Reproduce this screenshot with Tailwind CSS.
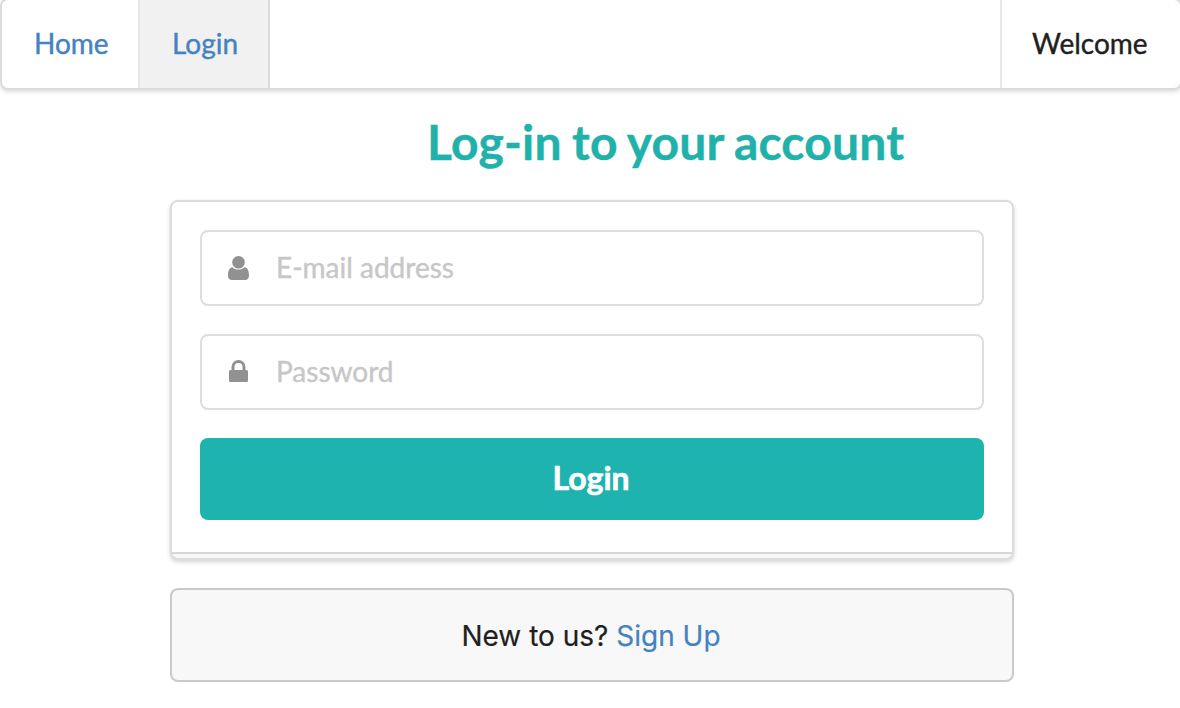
<!DOCTYPE html>
<html lang="en">
<head>
<meta charset="utf-8">
<title>Login</title>
<script src="https://cdn.jsdelivr.net/npm/@tailwindcss/browser@4"></script>
</head>
<body class="h-[708px] overflow-hidden bg-white font-['Lato',sans-serif] text-[28px] leading-[40px] text-[#1f1f1f]">
<nav class="-mt-[2px] flex h-[92px] w-[1182px] overflow-hidden rounded-lg border-2 border-[#dcdcdc] bg-white shadow-[0_2px_4px_rgba(34,36,38,0.15)] [-webkit-text-stroke:0.4px]">
  <a href="#" class="flex w-[138px] items-center border-r-2 border-[#e8e8e8] pb-[2px] pl-8 text-[#4582c1]">Home</a>
  <a href="#" class="flex w-[130px] items-center border-r-2 border-[#dadada] bg-[#f1f1f1] pb-[2px] pl-8 text-[#4582c1]">Login</a>
  <div class="ml-auto flex w-[180px] items-center border-l-2 border-[#e8e8e8] pb-[2px] pl-[30px]">Welcome</div>
</nav>
<main>
  <h2 class="mt-[23px] h-[59px] pl-[427px] text-[48px] leading-[58px] font-bold tracking-[0.2px] whitespace-nowrap text-[#20b2aa] [-webkit-text-stroke:0.4px] [word-spacing:-1.6px]">Log-in to your account</h2>
  <form class="mt-[28px] ml-[170px] h-[360px] w-[844px] overflow-visible rounded-lg border-2 border-[#dcdcdc] bg-[#f8f8f8] shadow-[0_2px_4px_rgba(34,36,38,0.2)]">
    <div class="h-[352px] rounded-t-md border-b-2 border-[#d6d6d6] bg-white px-7 pt-7">
      <label class="flex h-[76px] items-center rounded-lg border-2 border-[#dedede] pl-[26px] text-[#c7c7c7] [-webkit-text-stroke:0.4px]">
        <svg class="h-6 w-[21px] text-[#919191]" viewBox="0 0 21 24" fill="currentColor"><path d="M4.300 11.300C5.900 12.800 8 13.600 10.500 13.600s4.600-.8 6.200-2.300C19.500 11.500 21 15 21 19.500 21 22.300 19.500 24 17 24h-13C1.500 24 0 22.300 0 19.500 0 15 1.500 11.500 4.300 11.300Z"/><circle cx="10.500" cy="6.300" r="6.300"/></svg>
        <span class="ml-[27px] pb-[2px]">E-mail address</span>
      </label>
      <label class="mt-7 flex h-[76px] items-center rounded-lg border-2 border-[#dedede] pl-[27px] text-[#c7c7c7] [-webkit-text-stroke:0.4px]">
        <svg class="mb-[2px] h-[22px] w-[19px] text-[#919191]" viewBox="0 0 19 22" fill="currentColor"><path fill-rule="evenodd" d="M2.500 10V7a7 7 0 0 1 14 0v3h1A1.500 1.500 0 0 1 19 11.500v9a1.500 1.500 0 0 1-1.500 1.500h-16A1.500 1.500 0 0 1 0 20.500v-9A1.500 1.500 0 0 1 1.500 10ZM5.500 10h8V7a4 4 0 0 0-8 0Z"/></svg>
        <span class="ml-[28px] pb-[2px]">Password</span>
      </label>
      <button type="button" class="mt-7 block h-[82px] w-full rounded-lg bg-[#1eb3af] pr-[2px] pb-[2px] text-center text-[32px] leading-[80px] font-bold text-white [-webkit-text-stroke:0.6px]">Login</button>
    </div>
  </form>
  <div class="mt-7 ml-[170px] flex h-[94px] w-[844px] items-center justify-center rounded-lg border-2 border-[#c9c9c9] bg-[#f8f8f8] pt-[2px] pr-[2px] font-['Inter',sans-serif] whitespace-pre [-webkit-text-stroke:0.2px]">New to us? <a href="#" class="text-[#4582c1]">Sign Up</a></div>
</main>
</body>
</html>
